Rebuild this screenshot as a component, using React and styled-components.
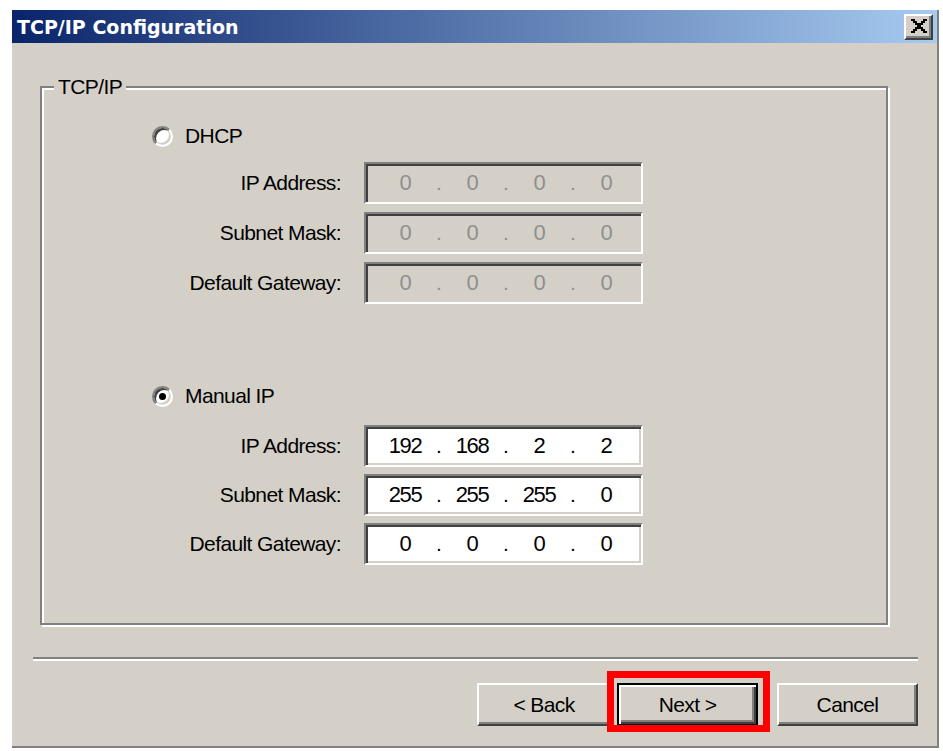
import React from 'react';
import styled, { createGlobalStyle, css } from 'styled-components';

const GlobalStyle = createGlobalStyle`
  html, body {
    margin: 0;
    padding: 0;
    background: #fff;
  }
  body {
    font-family: "Liberation Sans", Arial, sans-serif;
  }
`;

const Page = styled.div`
  width: 943px;
  height: 751px;
  padding: 10px 0 0 12px;
  box-sizing: border-box;
  overflow: hidden;
`;

const Window = styled.div`
  width: 927px;
  height: 738px;
  box-sizing: border-box;
  background: #d4d0c8;
  border-right: 2px solid #808080;
  border-bottom: 2px solid #808080;
  display: flex;
  flex-direction: column;
  font-size: 21px;
  letter-spacing: -0.6px;
  color: #000;
`;

const TitleBar = styled.div`
  height: 33px;
  flex: none;
  display: flex;
  align-items: center;
  justify-content: space-between;
  padding: 0 4px 0 5px;
  background: linear-gradient(to right, #0a246a, #a6caf0);
`;

const Title = styled.span`
  font-family: "DejaVu Sans", Verdana, sans-serif;
  font-weight: bold;
  font-size: 19px;
  letter-spacing: 0;
  color: #fff;
  padding-top: 1px;
`;

const CloseButton = styled.div`
  width: 29px;
  height: 26px;
  box-sizing: border-box;
  display: flex;
  align-items: center;
  justify-content: center;
  background: #d4d0c8;
  border: 2px solid;
  border-color: #fff #404040 #404040 #fff;
  box-shadow: inset -2px -2px 0 #808080;
  padding: 0 1px 1px 0;
`;

const GroupBox = styled.div`
  position: relative;
  width: 848px;
  height: 539px;
  box-sizing: border-box;
  margin: 43px 0 0 28px;
  border: 2px solid #808080;
  box-shadow: inset 2px 2px 0 #fff, 2px 2px 0 #fff;
`;

const Legend = styled.span`
  position: absolute;
  top: -13px;
  left: 12px;
  padding: 0 4px;
  line-height: 24px;
  background: #d4d0c8;
`;

const RadioRow = styled.div`
  display: flex;
  align-items: center;
  gap: 12px;
  height: 24px;
  margin: ${p => p.$top}px 0 0 110px;
`;

const Radio = styled.span`
  width: 21px;
  height: 21px;
  box-sizing: border-box;
  border-radius: 50%;
  border: 2px solid;
  border-color: #808080 #fff #fff #808080;
  box-shadow: inset 2px 2px 0 #404040, inset -2px -2px 0 #d4d0c8;
  background: #fff;
  display: flex;
  align-items: center;
  justify-content: center;

  &::after {
    content: '';
    display: ${p => (p.$checked ? 'block' : 'none')};
    width: 7px;
    height: 7px;
    border-radius: 50%;
    background: #000;
  }
`;

const RadioText = styled.span`
  line-height: 24px;
`;

const FieldGrid = styled.div`
  display: grid;
  grid-template-columns: 299px 279px;
  column-gap: 23px;
  row-gap: ${p => p.$gap}px;
  margin-top: ${p => p.$top}px;
  align-items: center;
`;

const Label = styled.span`
  text-align: right;
  line-height: 24px;
`;

const IpField = styled.div`
  width: 279px;
  height: 42px;
  box-sizing: border-box;
  display: flex;
  align-items: center;
  padding-left: 14px;
  border: 2px solid;
  border-color: #808080 #fff #fff #808080;
  box-shadow: inset 2px 2px 0 #404040, inset -2px -2px 0 #d4d0c8;
  background: ${p => (p.$disabled ? '#d4d0c8' : '#fff')};
  color: ${p => (p.$disabled ? '#8f8f8f' : '#000')};
`;

const Octet = styled.span`
  width: 50px;
  text-align: center;
  line-height: 26px;
  font-size: 22px;
  letter-spacing: -1.4px;
`;

const Dot = styled.span`
  width: 17px;
  text-align: center;
  line-height: 26px;
`;

const Separator = styled.div`
  margin: 32px 19px 0 21px;
  border-top: 2px solid #808080;
  border-bottom: 2px solid #fff;
`;

const ButtonRow = styled.div`
  display: flex;
  justify-content: flex-end;
  align-items: flex-start;
  margin-top: 22px;
  padding-right: 19px;
`;

const Button = styled.button`
  width: ${p => p.$w}px;
  height: 43px;
  margin-left: ${p => p.$gap || 0}px;
  box-sizing: border-box;
  padding: 0;
  font: inherit;
  letter-spacing: inherit;
  color: #000;
  background: #d4d0c8;
  border: 2px solid;
  border-color: #fff #404040 #404040 #fff;
  box-shadow: inset -2px -2px 0 #808080;

  ${p =>
    p.$default &&
    css`
      border-color: #000;
      box-shadow: inset 2px 2px 0 #fff, inset -2px -2px 0 #404040,
        inset -4px -4px 0 #808080;
    `}
`;

const HighlightWrap = styled.span`
  position: relative;
  display: inline-flex;
  margin-left: ${p => p.$gap}px;
`;

const Highlight = styled.span`
  position: absolute;
  left: -10px;
  top: -12px;
  right: -12px;
  bottom: -6px;
  border: 7px solid #ff0000;
  pointer-events: none;
`;

const closeGlyph = [
  'XX....XX',
  '.XX..XX.',
  '..XXXX..',
  '...XX...',
  '..XXXX..',
  '.XX..XX.',
  'XX....XX',
];

const CloseIcon = () => (
  <svg width="17" height="14" viewBox="0 0 8 7" shapeRendering="crispEdges">
    {closeGlyph.map((row, y) =>
      row.split('').map((c, x) =>
        c === 'X' ? <rect key={`${x}-${y}`} x={x} y={y} width="1" height="1" fill="#000" /> : null
      )
    )}
  </svg>
);

const IpBox = ({ value, disabled }) => {
  const parts = value.split('.');
  return (
    <IpField $disabled={disabled}>
      {parts.map((p, i) => (
        <React.Fragment key={i}>
          <Octet>{p}</Octet>
          {i < 3 && <Dot>.</Dot>}
        </React.Fragment>
      ))}
    </IpField>
  );
};

const IpRows = ({ values, disabled, top, gap }) => (
  <FieldGrid $top={top} $gap={gap}>
    <Label>IP Address:</Label>
    <IpBox value={values[0]} disabled={disabled} />
    <Label>Subnet Mask:</Label>
    <IpBox value={values[1]} disabled={disabled} />
    <Label>Default Gateway:</Label>
    <IpBox value={values[2]} disabled={disabled} />
  </FieldGrid>
);

export default function App() {
  return (
    <Page>
      <GlobalStyle />
      <Window>
        <TitleBar>
          <Title>TCP/IP Configuration</Title>
          <CloseButton>
            <CloseIcon />
          </CloseButton>
        </TitleBar>

        <GroupBox>
          <Legend>TCP/IP</Legend>

          <RadioRow $top={36}>
            <Radio />
            <RadioText>DHCP</RadioText>
          </RadioRow>
          <IpRows values={['0.0.0.0', '0.0.0.0', '0.0.0.0']} disabled top={14} gap={8} />

          <RadioRow $top={80}>
            <Radio $checked />
            <RadioText>Manual IP</RadioText>
          </RadioRow>
          <IpRows values={['192.168.2.2', '255.255.255.0', '0.0.0.0']} top={17} gap={7} />
        </GroupBox>

        <Separator />

        <ButtonRow>
          <Button $w={134}>&lt; Back</Button>
          <HighlightWrap $gap={6}>
            <Button $w={141} $default>Next &gt;</Button>
            <Highlight />
          </HighlightWrap>
          <Button $w={141} $gap={19}>Cancel</Button>
        </ButtonRow>
      </Window>
    </Page>
  );
}
